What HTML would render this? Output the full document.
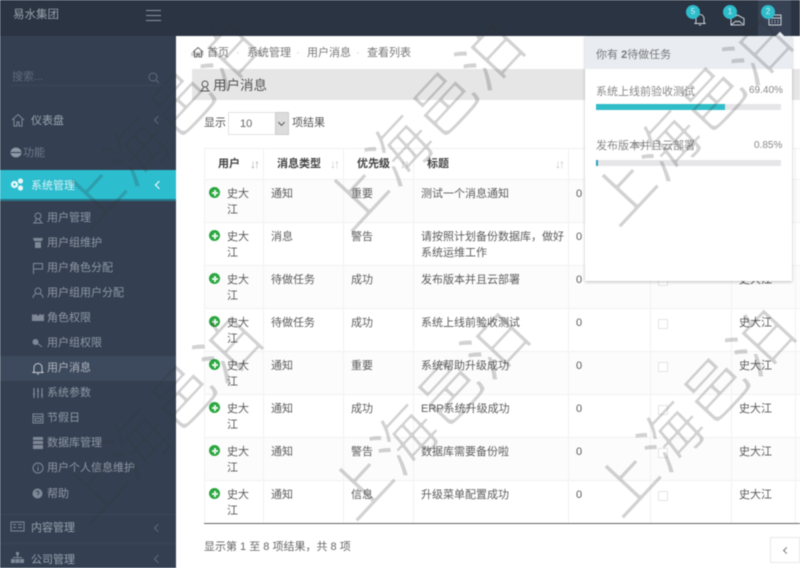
<!DOCTYPE html>
<html lang="zh"><head><meta charset="utf-8"><title>用户消息</title>
<style>
*{box-sizing:border-box}
html,body{margin:0;padding:0}
body{width:800px;height:568px;overflow:hidden;position:relative;background:#fff;font:11px/14px "Liberation Sans","Noto Sans CJK SC",sans-serif;color:#666}
#page{position:absolute;left:0;top:0;width:800px;height:568px;filter:blur(.45px);overflow:hidden}
#page>*{position:absolute}
#side{left:0;top:36px;width:176px;height:532px;background:#344052}
#top{left:0;top:0;width:800px;height:36px;background:#2b3442}
.m{left:31px;color:#9aa2ae;white-space:nowrap;line-height:14px;font-size:11px}
.s{left:47px;color:#8f97a4;white-space:nowrap;line-height:14px;font-size:11px}
svg.i{fill:none;stroke:#7f8896;stroke-width:1}
.chev{left:155px;width:6px;height:6px;border-left:1px solid #5f6877;border-bottom:1px solid #5f6877;transform:rotate(45deg)}
#page>table{left:204px;top:148px;width:596px;border-collapse:collapse;table-layout:fixed;color:#5c5c5c;font-size:11px;line-height:16px}
td,th{border:1px solid #f2f2f2;padding:0 4px 0 7px;vertical-align:top;text-align:left;overflow:hidden}
th{height:31px;vertical-align:middle;color:#444;font-weight:bold;border-top:1px solid #f0f0f0;position:relative}
td{height:43px;padding-top:6px;position:relative}
tbody tr:nth-child(odd) td{background:#fcfcfd}
tbody tr:last-child td{border-bottom:1px solid #666}
td.u{padding-left:22px;padding-right:4px}
.plus{position:absolute;left:4px;top:7px;width:11px;height:11px;border-radius:50%;background:#2aa63e}
.plus:before{content:"";position:absolute;left:2.500px;top:4.500px;width:6px;height:2px;background:#e8f8ea}
.plus:after{content:"";position:absolute;left:4.500px;top:2.500px;width:2px;height:6px;background:#e8f8ea}
.sort{position:absolute;right:5px;top:8px;font-size:12px;color:#c8c8c8;font-weight:normal;letter-spacing:-2px;line-height:14px}
.cb{position:absolute;left:7px;top:10px;width:10px;height:10px;border:1px solid #e4e4e4;background:#fff}
.dot{color:#ccc}
.badge{width:14px;height:14px;border-radius:50%;background:#2fbccb;color:#d5f3f6;font-size:8px;line-height:14px;text-align:center;top:5px}
#wm{left:0;top:0;pointer-events:none}
</style></head>
<body>
<div id="page">
  <div id="side"></div>
  <div id="top"></div>
  <div style="left:13px;top:8px;font-size:11.5px;color:#98a0ad;line-height:14px">易水集团</div>
  <div style="left:146px;top:10px;width:15px;height:11px;border-top:1px solid #8b93a0;border-bottom:1px solid #8b93a0"></div>
  <div style="left:146px;top:15px;width:15px;height:1px;background:#8b93a0"></div>

  <div style="left:12px;top:70px;color:#5f6a7a;line-height:14px">搜索...</div>
  <div style="left:10px;top:85px;width:155px;height:1px;background:#3b4759"></div>
  <svg class="i" style="left:147px;top:71px;stroke:#5f6a7a" width="13" height="13" viewBox="0 0 13 13"><circle cx="6" cy="6" r="4"/><path d="M9 9l3 3"/></svg>

  <svg class="i" style="left:11px;top:113px" width="14" height="14" viewBox="0 0 14 14"><path d="M1 7l6-5.500L13 7M3 6v7h3V9h2v4h3V6"/></svg>
  <div class="m" style="top:114px">仪表盘</div><div class="chev" style="top:117px"></div>
  <svg class="i" style="left:10px;top:147px;fill:#8f97a4;stroke:none" width="12" height="11" viewBox="0 0 12 11"><ellipse cx="6" cy="5.500" rx="5.500" ry="5"/><path d="M1 5h10v1H1z" fill="#344052"/></svg>
  <div class="m" style="left:23px;top:146px;color:#707989">功能</div>

  <div style="left:0;top:170px;width:176px;height:30px;background:#2cbdcf"></div>
  <div style="left:0;top:199px;width:176px;height:2px;background:#27778a"></div>
  <svg style="left:10px;top:178px" width="14" height="13" viewBox="0 0 14 13" fill="#e8f8fa"><circle cx="4.500" cy="6.500" r="3.600"/><circle cx="10.500" cy="3" r="2.600"/><circle cx="10.500" cy="10" r="2.600"/><circle cx="4.500" cy="6.500" r="1.200" fill="#2cbdcf"/></svg>
  <div class="m" style="top:179px;color:#d8f3f6">系统管理</div>
  <div class="chev" style="left:156px;top:182px;border-color:#fff;border-width:1.5px"></div>

  <div style="left:0;top:356px;width:176px;height:25px;background:#3d4a5d"></div>

  <svg class="i" style="left:32px;top:212px" width="12" height="12" viewBox="0 0 12 12"><circle cx="6" cy="4" r="3"/><path d="M1 11h10M3 11c0-2 1-3 2-3.500M9 11c0-2-1-3-2-3.500"/></svg>
  <div class="s" style="top:211px">用户管理</div>
  <svg class="i" style="left:32px;top:237px;fill:#7f8896;stroke:none" width="12" height="12" viewBox="0 0 12 12"><path d="M1 1h10l-1 3H2zM3 5h6v6H3z"/></svg>
  <div class="s" style="top:236px">用户组维护</div>
  <svg class="i" style="left:32px;top:262px" width="12" height="12" viewBox="0 0 12 12"><path d="M1.500 12V1.500h9V7h-9"/></svg>
  <div class="s" style="top:261px">用户角色分配</div>
  <svg class="i" style="left:32px;top:287px" width="12" height="12" viewBox="0 0 12 12"><circle cx="6" cy="4" r="3"/><path d="M1 11c0-3 2-4 3-4M11 11c0-3-2-4-3-4"/></svg>
  <div class="s" style="top:286px">用户组用户分配</div>
  <svg class="i" style="left:32px;top:313px;fill:#7f8896;stroke:none" width="12" height="10" viewBox="0 0 12 10"><path d="M0 1l2 1 2-1 2 2 2-2 2 1 2-1v7H0z"/></svg>
  <div class="s" style="top:311px">角色权限</div>
  <svg class="i" style="left:32px;top:338px" width="12" height="12" viewBox="0 0 12 12"><circle cx="3.500" cy="4" r="2.500" fill="#7f8896"/><path d="M5 5l5 4"/></svg>
  <div class="s" style="top:336px">用户组权限</div>
  <svg class="i" style="left:32px;top:362px;stroke:#c5cad2" width="12" height="13" viewBox="0 0 12 13"><path d="M2 9.500V5.500a4 4 0 018 0v4l1 1H1zM5 12h2"/></svg>
  <div class="s" style="top:361px;color:#b0b6c0">用户消息</div>
  <svg class="i" style="left:32px;top:387px" width="12" height="12" viewBox="0 0 12 12"><path d="M2 1v10M6 1v10M10 1v10M1 7h2M5 4h2M9 8h2" stroke-width="1.200"/></svg>
  <div class="s" style="top:386px">系统参数</div>
  <svg class="i" style="left:32px;top:412px" width="12" height="12" viewBox="0 0 12 12"><path d="M1 2h10v9H1zM1 4.500h10M3 6.500h6v2.500H3z"/></svg>
  <div class="s" style="top:411px">节假日</div>
  <svg class="i" style="left:33px;top:437px;fill:#7f8896;stroke:none" width="10" height="12" viewBox="0 0 10 12"><path d="M0 0h10v3H0zM0 4h10v3H0zM0 8h10v4H0z"/></svg>
  <div class="s" style="top:436px">数据库管理</div>
  <svg class="i" style="left:32px;top:462px" width="12" height="12" viewBox="0 0 12 12"><circle cx="6" cy="6" r="5"/><path d="M6 3v1M6 5v4"/></svg>
  <div class="s" style="top:461px">用户个人信息维护</div>
  <svg class="i" style="left:32px;top:488px;fill:#7f8896;stroke:none" width="11" height="11" viewBox="0 0 11 11"><circle cx="5.500" cy="5.500" r="5"/><path d="M4 4a1.500 1.500 0 112 2v1" stroke="#344052" fill="none"/></svg>
  <div class="s" style="top:487px">帮助</div>

  <div style="left:0;top:514px;width:176px;height:1px;background:#3b4759"></div>
  <svg class="i" style="left:10px;top:521px" width="15" height="11" viewBox="0 0 15 11"><path d="M1 1h13v9H1zM3 3.500h3M8 3.500h4M3 6.500h3M8 6.500h4"/></svg>
  <div class="m" style="top:521px">内容管理</div><div class="chev" style="top:525px"></div>
  <div style="left:0;top:543px;width:176px;height:1px;background:#3b4759"></div>
  <svg class="i" style="left:11px;top:552px;fill:#7f8896;stroke:none" width="13" height="12" viewBox="0 0 13 12"><path d="M5 0h3v3H5zM6 3h1v3H6zM2 5h9v1H2zM0 7h4v4H0zM4.500 7h4v4h-4zM9 7h4v4H9z"/></svg>
  <div class="m" style="top:553px">公司管理</div><div class="chev" style="top:556px"></div>

  <!-- breadcrumb -->
  <svg class="i" style="left:192px;top:46px;stroke:#666" width="12" height="12" viewBox="0 0 12 12"><path d="M1 6l5-4.500L11 6M2.500 5v6h2.500V8h2v3h2.500V5"/></svg>
  <div style="left:207px;top:46px;white-space:nowrap;color:#777;line-height:14px">首页</div>
  <div class="dot" style="left:236px;top:46px">·</div>
  <div style="left:247px;top:46px;white-space:nowrap;color:#777;line-height:14px">系统管理</div>
  <div class="dot" style="left:296px;top:46px">·</div>
  <div style="left:307px;top:46px;white-space:nowrap;color:#777;line-height:14px">用户消息</div>
  <div class="dot" style="left:356px;top:46px">·</div>
  <div style="left:367px;top:46px;white-space:nowrap;color:#777;line-height:14px">查看列表</div>

  <div style="left:192px;top:69px;width:608px;height:31px;background:#e6e6e6"></div>
  <svg class="i" style="left:199px;top:80px;stroke:#555" width="12" height="12" viewBox="0 0 12 12"><circle cx="6" cy="4" r="3"/><path d="M1 11h10M3 11c0-2 1-3 2-3.500M9 11c0-2-1-3-2-3.500"/></svg>
  <div style="left:213px;top:77px;font-size:13.5px;line-height:18px;color:#555;white-space:nowrap">用户消息</div>

  <div style="left:204px;top:116px;color:#555;line-height:14px">显示</div>
  <div style="left:228px;top:112px;width:61px;height:23px;border:1px solid #e3e3e3;background:#fff"></div>
  <div style="left:240px;top:117px;color:#666;line-height:14px">10</div>
  <div style="left:275px;top:112px;width:14px;height:23px;background:#dcdcdc;border:1px solid #ccc"></div>
  <div style="left:279px;top:120px;width:5px;height:5px;border-right:1px solid #555;border-bottom:1px solid #555;transform:rotate(45deg)"></div>
  <div style="left:292px;top:116px;color:#555;line-height:14px">项结果</div>

  <table>
    <colgroup><col style="width:59px"><col style="width:80px"><col style="width:70px"><col style="width:155px"><col style="width:82px"><col style="width:81px"><col style="width:64px"><col style="width:5px"></colgroup>
    <thead><tr>
      <th style="padding-left:13px">用户<span class="sort" style="color:#aaa">↓↑</span></th>
      <th style="padding-left:13px">消息类型<span class="sort">↓↑</span></th>
      <th style="padding-left:13px">优先级<span class="sort">↓↑</span></th>
      <th style="padding-left:13px">标题<span class="sort">↓↑</span></th>
      <th><span class="sort">↓↑</span></th><th></th><th></th><th></th>
    </tr></thead>
    <tbody>
      <tr><td class="u"><i class="plus"></i>史大江</td><td>通知</td><td>重要</td><td>测试一个消息通知</td><td>0</td><td><i class="cb"></i></td><td>史大江</td><td></td></tr>
      <tr><td class="u"><i class="plus"></i>史大江</td><td>消息</td><td>警告</td><td>请按照计划备份数据库，做好系统运维工作</td><td>0</td><td><i class="cb"></i></td><td>史大江</td><td></td></tr>
      <tr><td class="u"><i class="plus"></i>史大江</td><td>待做任务</td><td>成功</td><td>发布版本并且云部署</td><td>0</td><td><i class="cb"></i></td><td>史大江</td><td></td></tr>
      <tr><td class="u"><i class="plus"></i>史大江</td><td>待做任务</td><td>成功</td><td>系统上线前验收测试</td><td>0</td><td><i class="cb"></i></td><td>史大江</td><td></td></tr>
      <tr><td class="u"><i class="plus"></i>史大江</td><td>通知</td><td>重要</td><td>系统帮助升级成功</td><td>0</td><td><i class="cb"></i></td><td>史大江</td><td></td></tr>
      <tr><td class="u"><i class="plus"></i>史大江</td><td>通知</td><td>成功</td><td>ERP系统升级成功</td><td>0</td><td><i class="cb"></i></td><td>史大江</td><td></td></tr>
      <tr><td class="u"><i class="plus"></i>史大江</td><td>通知</td><td>警告</td><td>数据库需要备份啦</td><td>0</td><td><i class="cb"></i></td><td>史大江</td><td></td></tr>
      <tr><td class="u"><i class="plus"></i>史大江</td><td>通知</td><td>信息</td><td>升级菜单配置成功</td><td>0</td><td><i class="cb"></i></td><td>史大江</td><td></td></tr>
    </tbody>
  </table>

  <div style="left:204px;top:540px;color:#666;line-height:14px;white-space:nowrap">显示第 1 至 8 项结果，共 8 项</div>
  <div style="left:770px;top:537px;width:30px;height:26px;border:1px solid #e8e8e8;background:#fff"></div>
  <div style="left:784px;top:548px;width:5px;height:5px;border-left:1px solid #777;border-bottom:1px solid #777;transform:rotate(45deg)"></div>

  <!-- dropdown -->
  <div style="left:585px;top:36px;width:207px;height:245px;background:#fff;box-shadow:0 1px 3px rgba(0,0,0,.25)"></div>
  <div style="left:585px;top:36px;width:207px;height:33px;background:#e9edf2"></div>
  <div style="left:596px;top:48px;color:#777;line-height:14px;white-space:nowrap">你有 <b>2</b>待做任务</div>
  <div style="left:596px;top:85px;color:#888;line-height:14px;white-space:nowrap">系统上线前验收测试</div>
  <div style="left:749px;top:84px;color:#888;line-height:14px;font-size:10px">69.40%</div>
  <div style="left:596px;top:104px;width:185px;height:6px;background:#e6e6e9"></div>
  <div style="left:596px;top:104px;width:129px;height:6px;background:#2fbdc8"></div>
  <div style="left:596px;top:139px;color:#888;line-height:14px;white-space:nowrap">发布版本并且云部署</div>
  <div style="left:754px;top:139px;color:#888;line-height:14px;font-size:10px">0.85%</div>
  <div style="left:596px;top:160px;width:185px;height:6px;background:#e6e6e9"></div>
  <div style="left:596px;top:160px;width:2px;height:6px;background:#2b9fc0"></div>

  <!-- top right -->
  <div style="left:758px;top:0;width:33px;height:36px;background:#374254"></div>
  <div style="left:777px;top:33px;width:6px;height:6px;background:#e9edf2;transform:rotate(45deg)"></div>
  <svg class="i" style="left:694px;top:13px;stroke:#c8ced6" width="12" height="13" viewBox="0 0 12 13"><path d="M2 9.500V5.500a4 4 0 018 0v4l1 1H1zM5 12h2"/></svg>
  <svg class="i" style="left:730px;top:14px;stroke:#c8ced6" width="15" height="12" viewBox="0 0 15 12"><path d="M1 4.500L7.500 1 14 4.500V11H1zM1 11l5-4 1.500 1 1.500-1 5 4"/></svg>
  <svg class="i" style="left:768px;top:14px;stroke:#c8ced6" width="14" height="12" viewBox="0 0 14 12"><path d="M1 1h12v10H1zM1 4h12M3.500 6.500h1M6.500 6.500h1M9.500 6.500h1M3.500 8.500h1M6.500 8.500h1M9.500 8.500h1"/></svg>
  <div class="badge" style="left:686px">5</div>
  <div class="badge" style="left:723px">1</div>
  <div class="badge" style="left:761px">2</div>

  <!-- watermark -->
  <svg id="wm" width="800" height="568" viewBox="0 0 800 568">
    <defs><filter id="thin" x="0" y="0" width="100%" height="100%" filterUnits="userSpaceOnUse" primitiveUnits="userSpaceOnUse"><feMorphology operator="erode" radius="0.7"/></filter></defs>
    <g filter="url(#thin)" opacity=".22">
    <g font-family="IPAGothic,'Noto Sans CJK SC',sans-serif" font-size="65" fill="#333">
      <text transform="translate(88,237) rotate(-47)">上海邑泊</text>
      <text transform="translate(351,237) rotate(-47)">上海邑泊</text>
      <text transform="translate(619,232) rotate(-47)">上海邑泊</text>
      <text transform="translate(89,530) rotate(-47)">上海邑泊</text>
      <text transform="translate(356,526) rotate(-47)">上海邑泊</text>
      <text transform="translate(622,523) rotate(-47)">上海邑泊</text>
    </g>
    </g>
  </svg>
</div>
</body></html>
